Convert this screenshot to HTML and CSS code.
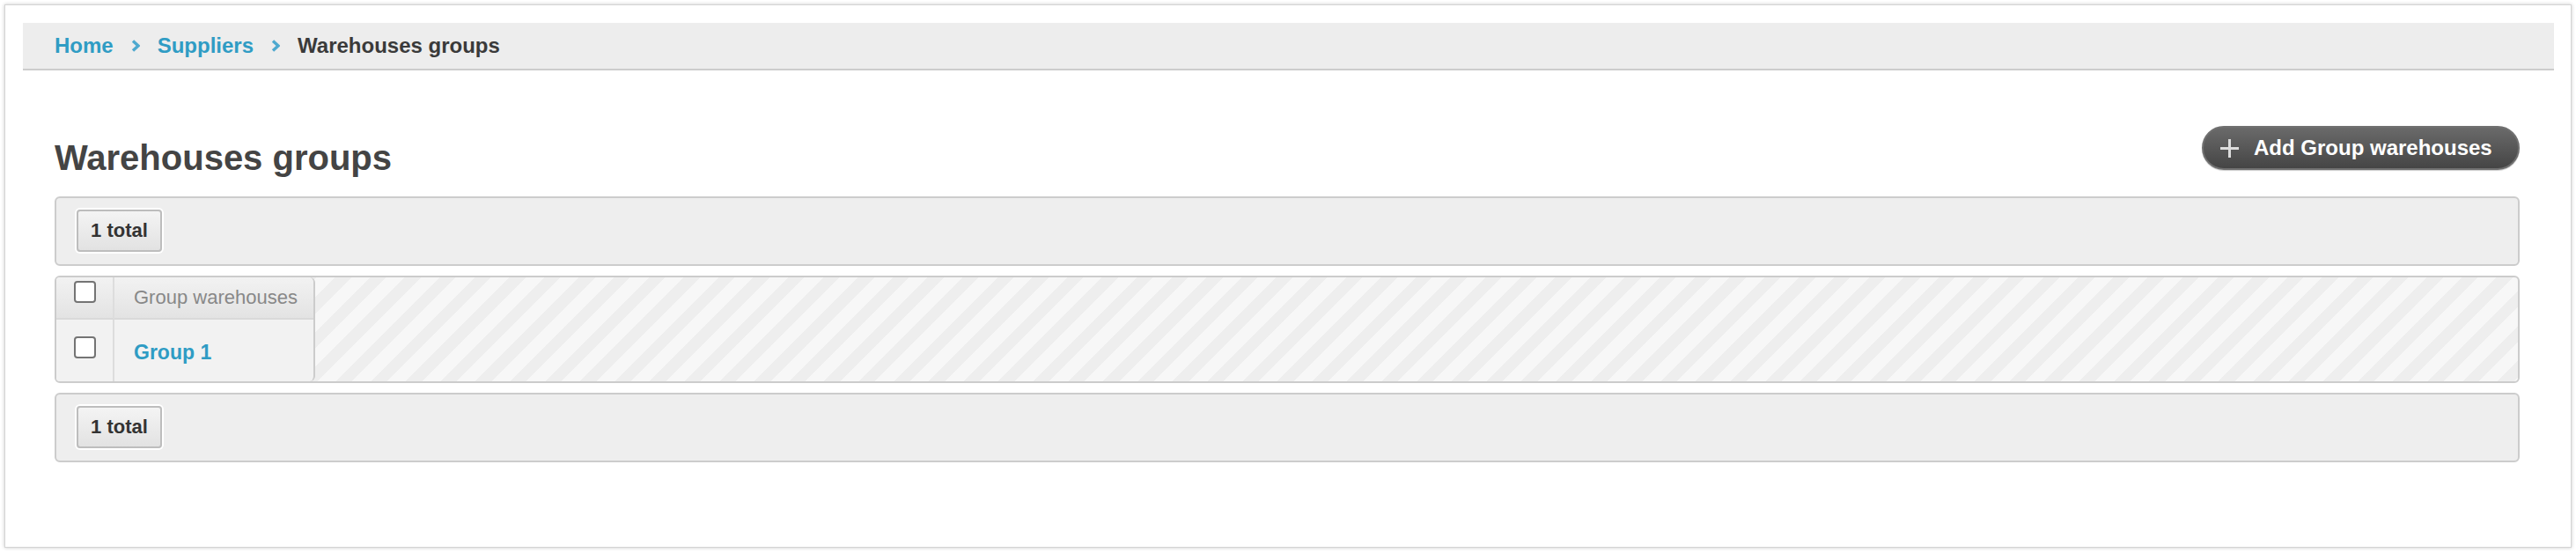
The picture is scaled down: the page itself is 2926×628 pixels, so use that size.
FILE: index.html
```html
<!DOCTYPE html>
<html lang="en">
<head>
<meta charset="utf-8">
<title>Warehouses groups</title>
<link rel="stylesheet" href="styles.css">
</head>
<body>
<div class="frame">
  <nav class="crumbs">
    <a class="crumb-link" href="#">Home</a>
    <svg class="crumb-sep" width="10" height="14" viewBox="0 0 10 14"><path d="M2 1.5 L8 7 L2 12.5" fill="none" stroke="#4ea9cf" stroke-width="3.4"/></svg>
    <a class="crumb-link" href="#">Suppliers</a>
    <svg class="crumb-sep" width="10" height="14" viewBox="0 0 10 14"><path d="M2 1.5 L8 7 L2 12.5" fill="none" stroke="#4ea9cf" stroke-width="3.4"/></svg>
    <span class="crumb-current">Warehouses groups</span>
  </nav>
  <main class="content">
    <div class="page-head">
      <h1 class="title">Warehouses groups</h1>
      <button class="btn-add" type="button">
        <svg class="plus" width="23" height="23" viewBox="0 0 23 23"><path d="M11.5 1 V22 M1 11.5 H22" stroke="#dcdcdc" stroke-width="3" fill="none"/></svg>
        <span>Add Group warehouses</span>
      </button>
    </div>
    <div class="toolbar"><span class="count-btn">1 total</span></div>
    <div class="grid">
      <table class="list">
        <thead>
          <tr>
            <th class="col-check"><span class="checkbox"></span></th>
            <th class="col-name">Group warehouses</th>
          </tr>
        </thead>
        <tbody>
          <tr>
            <td class="col-check"><span class="checkbox"></span></td>
            <td class="col-name"><a class="row-link" href="#">Group 1</a></td>
          </tr>
        </tbody>
      </table>
    </div>
    <div class="toolbar toolbar-bottom"><span class="count-btn">1 total</span></div>
  </main>
</div>
</body>
</html>
```

FILE: styles.css
```css
html, body {
  margin: 0;
  padding: 0;
  background: #ffffff;
}
body {
  font-family: "Liberation Sans", Arial, sans-serif;
  color: #333;
}
.frame {
  margin: 5px;
  height: 617px;
  box-sizing: border-box;
  border: 1px solid #d4d4d4;
  background: #fff;
  box-shadow: 0 0 4px rgba(0, 0, 0, 0.22);
}
.crumbs {
  margin: 20px 19px 0 20px;
  height: 54px;
  box-sizing: border-box;
  background: #ededed;
  border-bottom: 2px solid #cccccc;
  padding-left: 36px;
  display: flex;
  align-items: center;
  font-size: 24px;
  font-weight: bold;
}
.crumb-link {
  color: #2f9cc4;
  text-decoration: none;
}
.crumb-sep {
  margin: 0 20px 0 20px;
  display: block;
}
.crumb-current {
  color: #3a3a3a;
}
.content {
  padding: 63px 58px 0 56px;
}
.page-head {
  display: flex;
  justify-content: space-between;
  align-items: flex-start;
}
.title {
  margin: 13px 0 0 0;
  font-size: 40px;
  line-height: 46px;
  font-weight: bold;
  color: #444444;
}
.btn-add {
  width: 361px;
  height: 50px;
  box-sizing: border-box;
  border: 2px solid #707070;
  border-radius: 25px;
  background: linear-gradient(#6a6a6a, #454545);
  color: #fff;
  font-family: "Liberation Sans", Arial, sans-serif;
  font-size: 24px;
  font-weight: bold;
  display: flex;
  align-items: center;
  padding: 0 0 0 18px;
  gap: 16px;
  box-shadow: 0 1px 1px rgba(0, 0, 0, 0.2);
}
.plus {
  display: block;
}
.toolbar {
  margin-top: 21px;
  border: 2px solid #cccccc;
  border-radius: 6px;
  background: #eeeeee;
  padding: 11px 0 12px 21px;
}
.toolbar-bottom {
  margin-top: 11px;
}
.count-btn {
  display: inline-flex;
  align-items: center;
  justify-content: center;
  width: 97px;
  height: 48px;
  margin: 2px;
  box-sizing: border-box;
  border: 2px solid #bdbdbd;
  border-radius: 4px;
  box-shadow: 0 0 0 2px #ffffff;
  background: linear-gradient(#f4f4f4, #e2e2e2);
  font-size: 22px;
  font-weight: bold;
  color: #333;
  vertical-align: top;
}
.grid {
  margin-top: 11px;
  border: 2px solid #cccccc;
  border-radius: 6px;
  overflow: hidden;
  background: repeating-linear-gradient(135deg, #eeeeee 0 13px, #f7f7f7 13px 28px);
}
.list {
  border-collapse: separate;
  border-spacing: 0;
  background: #f2f2f2;
  border-right: 2px solid #cccccc;
  border-radius: 0 6px 6px 0;
}
.list th,
.list td {
  padding: 0;
  text-align: left;
}
.list th {
  height: 46px;
  background: linear-gradient(#f2f2f2, #e3e3e3);
  border-bottom: 2px solid #d9d9d9;
  font-size: 22px;
  font-weight: normal;
  color: #888888;
}
.list td {
  height: 70px;
}
.col-check {
  width: 64px;
  border-right: 2px solid #dddddd;
  text-align: center !important;
  vertical-align: top;
}
th.col-check {
  padding-top: 4px !important;
  height: 42px !important;
}
td.col-check {
  padding-top: 19px !important;
  height: 51px !important;
}
.col-name {
  width: 204px;
  padding-left: 22px !important;
  vertical-align: middle;
}
td.col-name {
  padding-top: 5px !important;
  height: 65px !important;
}
.list th:last-child {
  border-top-right-radius: 6px;
}
.checkbox {
  display: inline-block;
  width: 25px;
  height: 25px;
  box-sizing: border-box;
  border: 2px solid #747474;
  border-radius: 4px;
  background: #fff;
  vertical-align: top;
}
.row-link {
  color: #2f9cc4;
  font-weight: bold;
  font-size: 23px;
  text-decoration: none;
}
```
